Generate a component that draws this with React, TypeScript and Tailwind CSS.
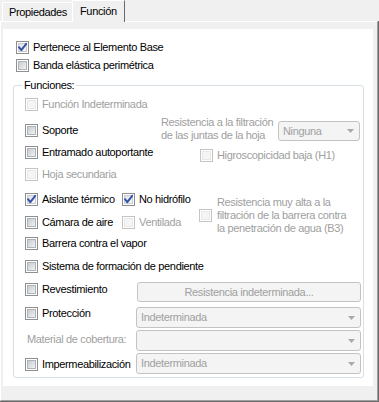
import React from "react";

const GRAY = "text-[#a0a0a0]";

function Box({ checked = false, disabled = false }: { checked?: boolean; disabled?: boolean }) {
  return (
    <span
      className={`relative flex h-[13px] w-[13px] shrink-0 border bg-white p-[1px] ${
        disabled ? "border-[#c4c4c4]" : "border-[#8e8f8f]"
      }`}
    >
      <span
        className={`block h-full w-full border ${
          disabled
            ? "border-[#e8e8e8] bg-[#f5f5f5]"
            : checked
            ? "border-[#c9cdd2] bg-linear-to-br from-[#dfe2e6] to-[#f7f7f7]"
            : "border-[#aeb3b9] bg-linear-to-br from-[#c8ccd1] to-[#f1f2f3]"
        }`}
      />
      {checked && (
        <svg className="absolute -left-[1px] -top-[1px]" width="13" height="13" viewBox="0 0 13 13">
          <path d="M3 6.2 L5.3 9.2 L10.2 2.8" fill="none" stroke="#3450a8" strokeWidth="1.9" strokeLinecap="round" strokeLinejoin="round" />
        </svg>
      )}
    </span>
  );
}

function Check({
  label,
  checked = false,
  disabled = false,
  className = "",
}: {
  label: string;
  checked?: boolean;
  disabled?: boolean;
  className?: string;
}) {
  return (
    <div className={`flex h-[13px] items-center gap-[4px] ${className}`}>
      <Box checked={checked} disabled={disabled} />
      <span className={`whitespace-nowrap leading-[13px] ${disabled ? GRAY : "text-black"}`}>{label}</span>
    </div>
  );
}

function Arrow() {
  return (
    <svg width="7" height="4" viewBox="0 0 7 4" className="shrink-0">
      <path d="M0 0H7L3.5 4Z" fill="#a9a9a9" />
    </svg>
  );
}

function Combo({ text, className = "" }: { text: string; className?: string }) {
  return (
    <div
      className={`flex items-center justify-between rounded-[3px] border border-[#c3c3c3] bg-[#f4f4f4] pl-[4px] pr-[5px] ${GRAY} ${className}`}
    >
      <span className="whitespace-nowrap leading-[13px]">{text}</span>
      <Arrow />
    </div>
  );
}

export default function App() {
  return (
    <div className="h-[402px] w-[379px] overflow-hidden bg-[#f0f0f0] font-['Liberation_Sans',Arial,sans-serif] text-[11px] tracking-[-0.35px] text-black">
      {/* tab strip */}
      <div className="flex h-[21px] items-end pl-[2px]">
        <div className="flex h-[19px] w-[70px] items-center border-l border-t border-white pl-[6px]">
          <span className="leading-[13px]">Propiedades</span>
        </div>
        <div className="relative z-10 -mb-[1px] flex h-[22px] w-[53px] items-center border-l border-r border-t border-l-white border-r-[#696969] border-t-white bg-[#f0f0f0] pl-[7px]">
          <span className="leading-[13px]">Función</span>
        </div>
      </div>

      {/* panel */}
      <div className="h-[381px] border-b border-r border-[#696969]">
        <div className="h-full border-b border-l border-r border-t border-b-[#a0a0a0] border-l-white border-r-[#a0a0a0] border-t-white pl-[2px] pr-[4px] pt-[7px]">
          <div className="flex h-[357px] w-[370px] flex-col bg-white">
            <Check label="Pertenece al Elemento Base" checked className="ml-[13px] mt-[12px]" />
            <Check label="Banda elástica perimétrica" className="ml-[13px] mt-[5px]" />

            {/* group box */}
            <div className="relative ml-[10px] mt-[13px] flex h-[293px] w-[351px] flex-col rounded-[3px] border border-[#d5dfe5]">
              <span className="absolute -top-[7px] left-[8px] bg-white px-[2px] leading-[13px]">Funciones:</span>

              {/* section A */}
              <div className="flex h-[95px]">
                <div className="flex w-[147px] flex-col pl-[11px]">
                  <Check label="Función Indeterminada" disabled className="mt-[12px]" />
                  <Check label="Soporte" className="mt-[13px]" />
                  <Check label="Entramado autoportante" className="mt-[9px]" />
                  <Check label="Hoja secundaria" disabled className="mt-[9px]" />
                </div>
                <div className="flex flex-col">
                  <div className="mt-[30px] flex items-start">
                    <div className={`w-[117px] leading-[13px] ${GRAY}`}>
                      <div className="whitespace-nowrap">Resistencia a la filtración</div>
                      <div className="whitespace-nowrap">de las juntas de la hoja</div>
                    </div>
                    <Combo text="Ninguna" className="mt-[5px] h-[20px] w-[82px]" />
                  </div>
                  <Check label="Higroscopicidad baja (H1)" disabled className="ml-[39px] mt-[7px]" />
                </div>
              </div>

              {/* section B */}
              <div className="flex h-[56px]">
                <div className="flex w-[185px] flex-col pl-[11px]">
                  <div className="mt-[12px] flex">
                    <Check label="Aislante térmico" checked className="w-[97px]" />
                    <Check label="No hidrófilo" checked />
                  </div>
                  <div className="mt-[10px] flex">
                    <Check label="Cámara de aire" className="w-[97px]" />
                    <Check label="Ventilada" disabled />
                  </div>
                </div>
                <div className="mt-[13px] flex items-center gap-[5px]">
                  <Box disabled />
                  <div className={`leading-[13px] ${GRAY}`}>
                    <div className="whitespace-nowrap">Resistencia muy alta a la</div>
                    <div className="whitespace-nowrap">filtración de la barrera contra</div>
                    <div className="whitespace-nowrap">la penetración de agua (B3)</div>
                  </div>
                </div>
              </div>

              <Check label="Barrera contra el vapor" className="ml-[11px]" />
              <Check label="Sistema de formación de pendiente" className="ml-[11px] mt-[10px]" />

              <div className="mt-[9px] flex h-[20px] items-start">
                <div className="w-[122px] pl-[11px]">
                  <Check label="Revestimiento" className="mt-[1px]" />
                </div>
                <div
                  className={`ml-[1px] flex h-[20px] w-[224px] items-center justify-center rounded-[3px] border border-[#c3c3c3] bg-[#f4f4f4] ${GRAY}`}
                >
                  <span className="whitespace-nowrap leading-[13px]">Resistencia indeterminada...</span>
                </div>
              </div>

              <div className="mt-[5px] flex h-[21px] items-start">
                <div className="w-[122px] pl-[11px]">
                  <Check label="Protección" />
                </div>
                <Combo text="Indeterminada" className="h-[21px] w-[225px]" />
              </div>

              <div className="mt-[2px] flex h-[21px] items-start">
                <div className={`w-[122px] pl-[13px] ${GRAY}`}>
                  <div className="mt-[3px] whitespace-nowrap leading-[13px]">Material de cobertura:</div>
                </div>
                <Combo text="" className="h-[21px] w-[225px]" />
              </div>

              <div className="mt-[2px] flex h-[21px] items-start">
                <div className="w-[122px] pl-[11px]">
                  <Check label="Impermeabilización" className="mt-[5px]" />
                </div>
                <Combo text="Indeterminada" className="h-[21px] w-[225px]" />
              </div>
            </div>
          </div>
        </div>
      </div>
    </div>
  );
}
